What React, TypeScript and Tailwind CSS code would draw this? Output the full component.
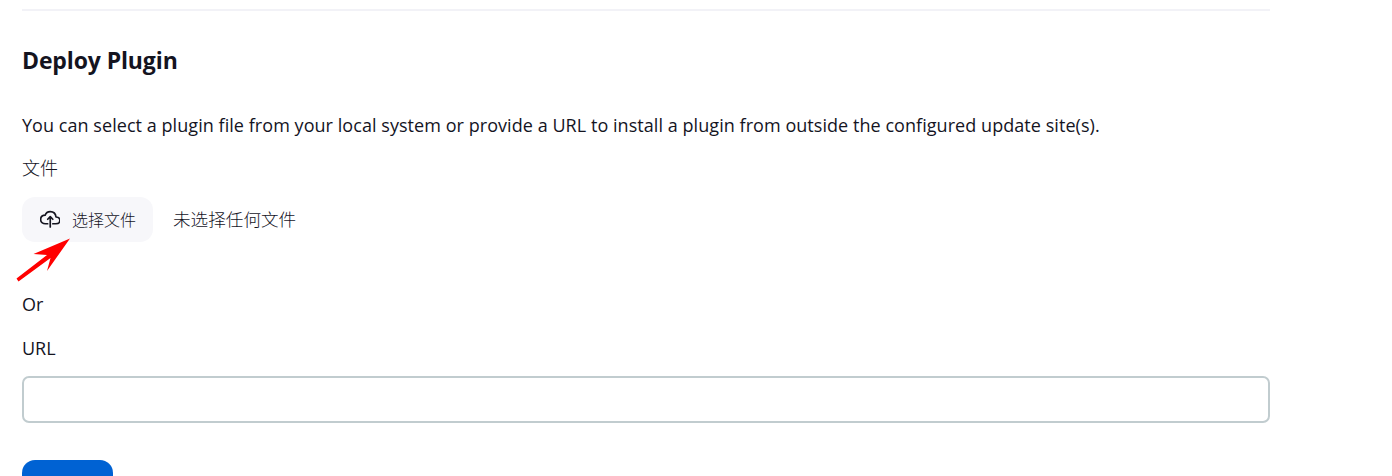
function UploadIcon() {
  return (
    <svg viewBox="0 0 512 512" className="size-[20.5px] shrink-0" fill="none" stroke="#14141f" strokeWidth="42" strokeLinecap="round" strokeLinejoin="round">
      <path d="M320 367.79h76c55 0 100-29.21 100-83.6s-53-81.47-96-83.6c-8.89-85.06-71-136.8-144-136.8-69 0-113.44 45.79-128 91.2-60 5.7-112 43.88-112 106.4s54 106.4 120 106.4h56" />
      <path d="M320 255.79l-64-64-64 64M256 448.21V207.79" />
    </svg>
  );
}

function Pointer() {
  return (
    <svg viewBox="0 0 54 44" className="pointer-events-none absolute top-[41px] -left-[6px] h-[44px] w-[54px]" fill="#ff0000">
      <path d="M54 0.5L17.5 16L31 17L0.5 40.5L2.5 43.5L34.5 20L31 33Z" />
    </svg>
  );
}

export default function App() {
  return (
    <main className="h-[476px] overflow-hidden bg-white pt-[9px] pl-[22px] font-['Open_Sans','Noto_Sans_CJK_SC',sans-serif] text-[18px] leading-[26px] text-[#14141f]">
      <div className="flex w-[1248px] flex-col items-start">
        <hr className="h-[2px] w-full border-0 bg-[#f2f2f7]" />
        <h2 className="mt-[33px] text-[23px] leading-8 font-bold tracking-[-0.12px] whitespace-nowrap">
          Deploy Plugin
        </h2>
        <p className="mt-[36px] tracking-[0.052px] whitespace-nowrap">
          You can select a plugin file from your local system or provide a URL to install a plugin from outside the configured update site(s).
        </p>
        <label className="mt-[17px] font-light">文件</label>
        <div className="relative mt-4 flex h-[45px] items-center gap-5">
          <button type="button" className="flex h-[45px] w-[131px] items-center gap-[12px] rounded-[13px] bg-[#f7f7fa] pl-[17.5px] text-[16px] font-light whitespace-nowrap">
            <UploadIcon />
            <span>选择文件</span>
          </button>
          <span className="pb-0.5 text-[17.6px] font-light">未选择任何文件</span>
          <Pointer />
        </div>
        <p className="mt-[49px]">Or</p>
        <label className="mt-[18px]" htmlFor="plugin-url">URL</label>
        <input id="plugin-url" type="text" className="mt-[15px] h-[47px] w-full rounded-[7px] border-2 border-[#c1cccf] px-3 outline-none" />
        <button type="button" aria-label="Deploy" className="mt-[37px] h-[45px] w-[91px] rounded-[13px] bg-[#0062d3]" />
      </div>
    </main>
  );
}
